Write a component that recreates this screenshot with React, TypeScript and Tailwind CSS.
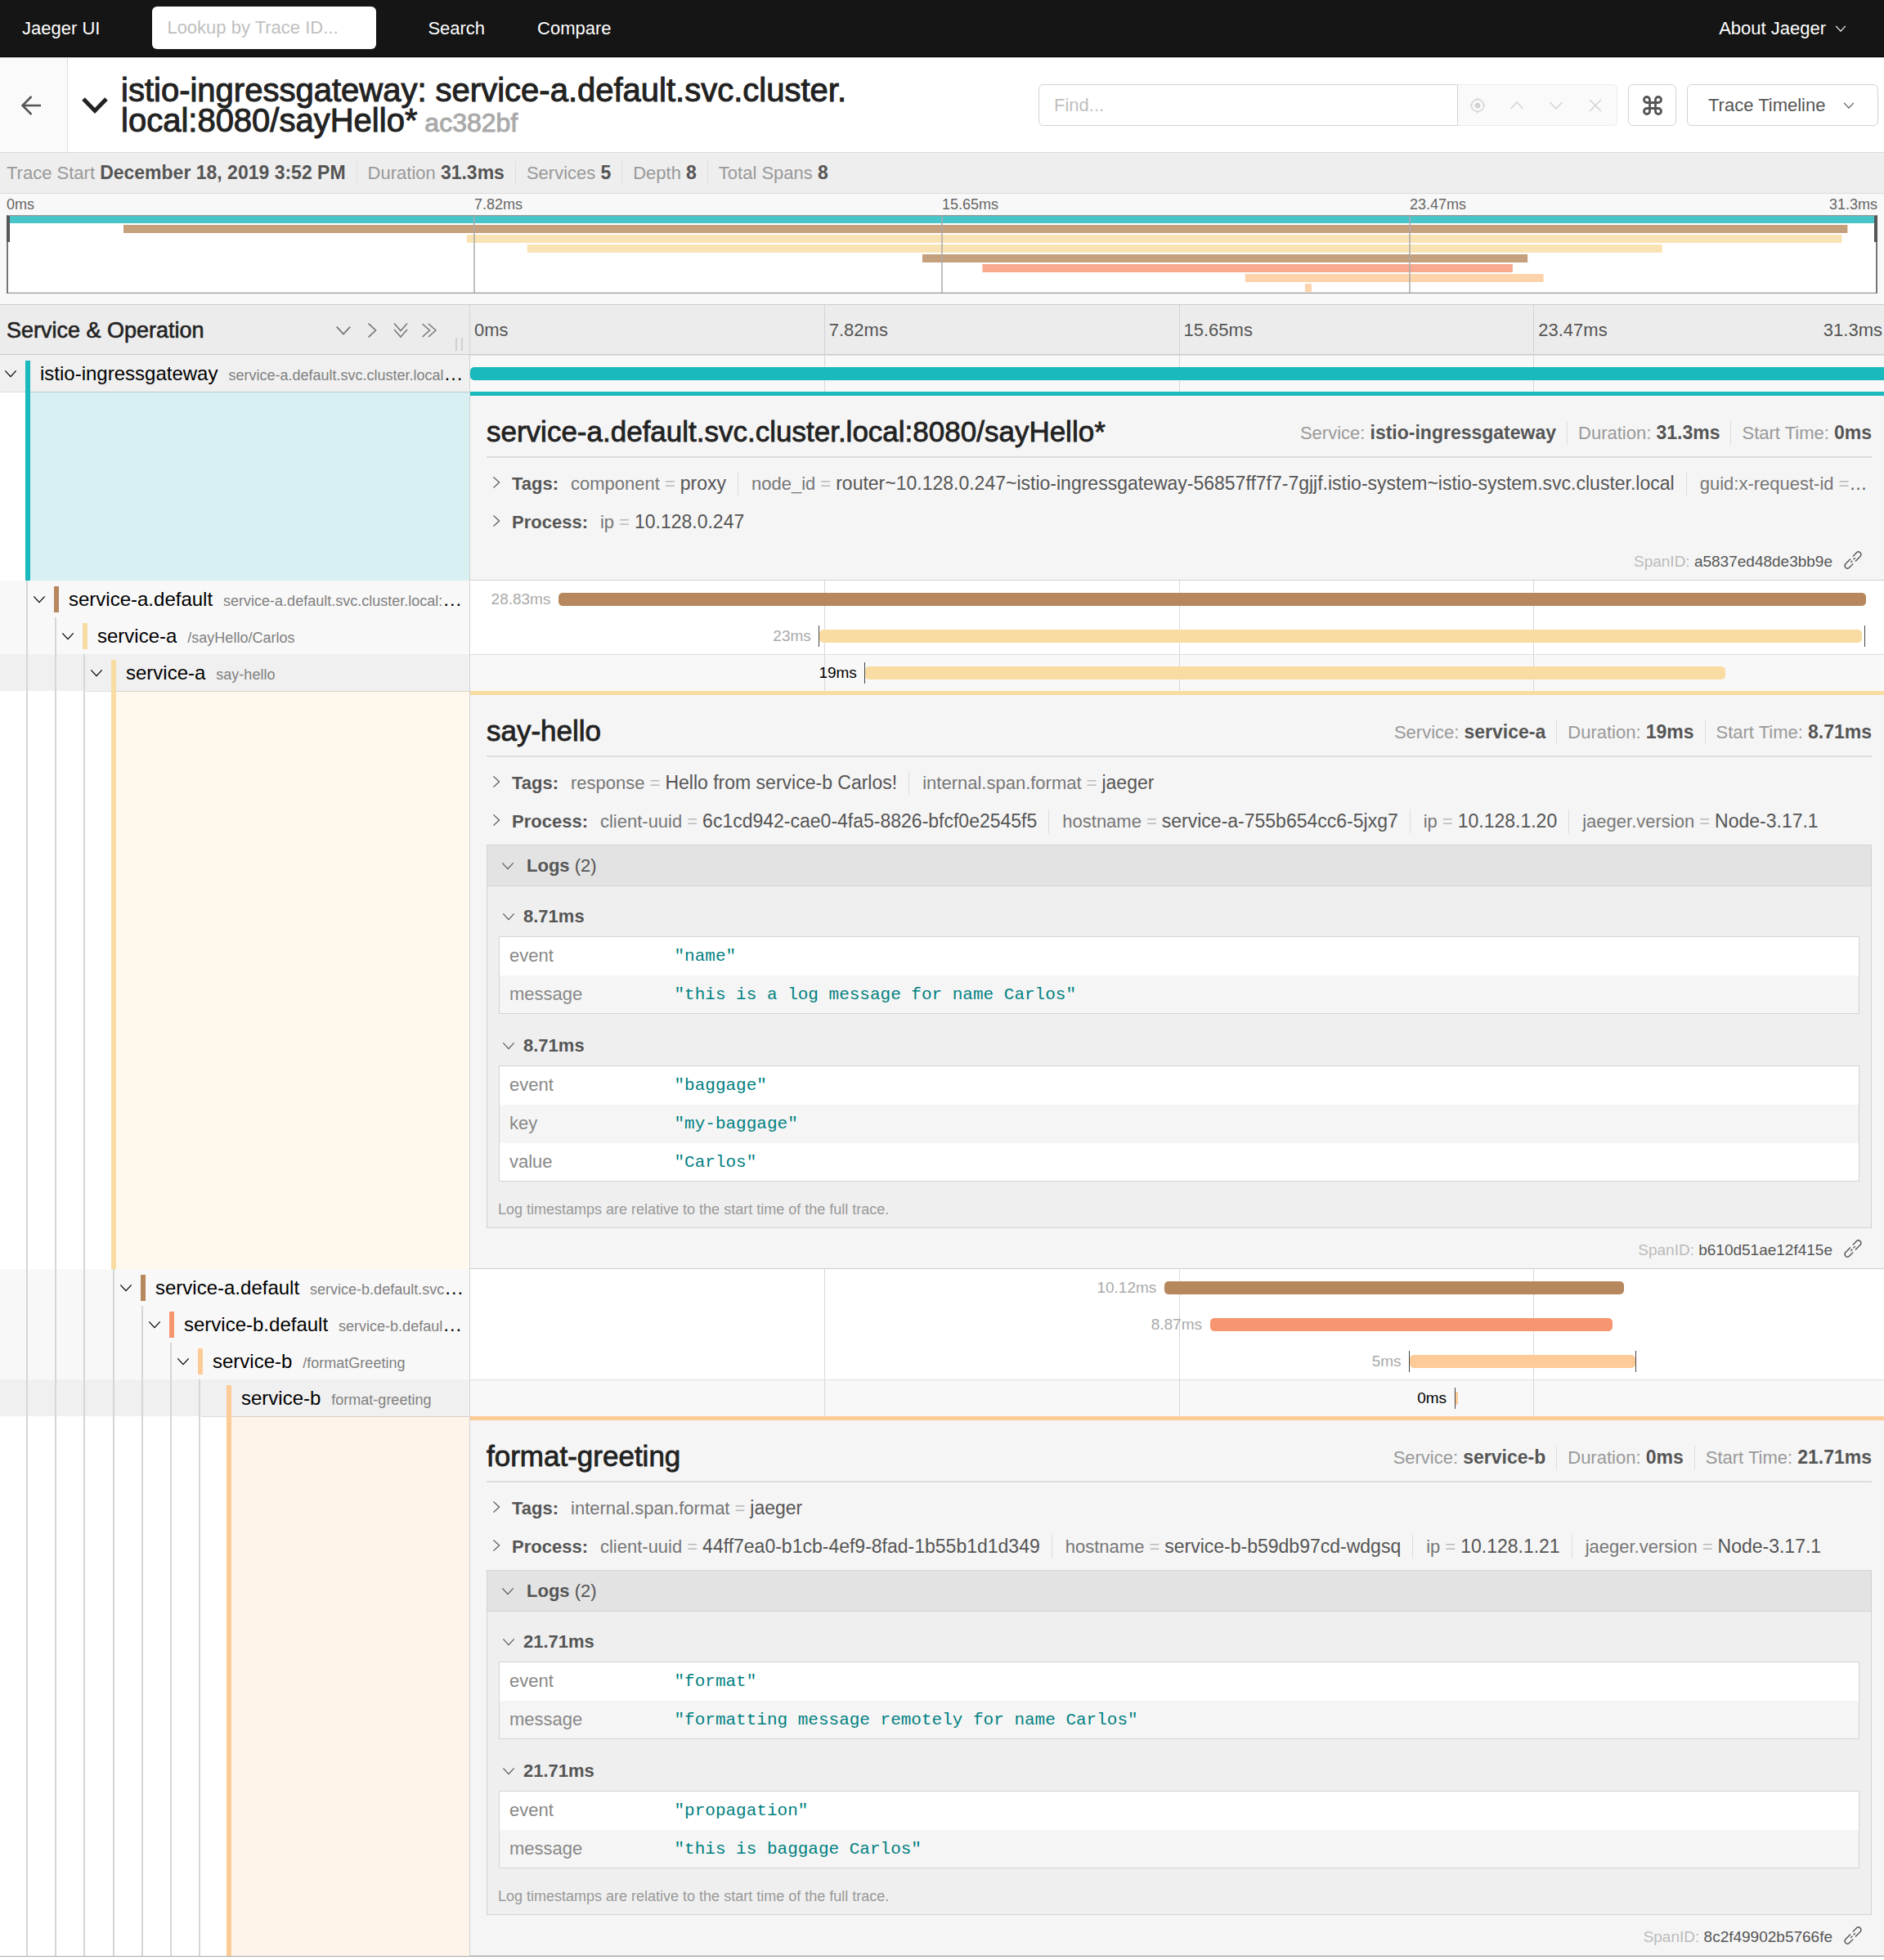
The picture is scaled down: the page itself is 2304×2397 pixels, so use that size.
import type { ReactNode } from "react";
import { Command } from "lucide-react";

type Direction = "down" | "right" | "up";

const CHEVRONS: Record<Direction, string> = {
  down: "M1.5 5 L9 13 L16.5 5",
  up: "M1.5 13 L9 5 L16.5 13",
  right: "M5 1.5 L13 9 L5 16.5",
};

function Chevron({ dir = "down", className = "size-[18px]", weight = 1.5 }: { dir?: Direction; className?: string; weight?: number }) {
  return (
    <svg viewBox="0 0 18 18" fill="none" stroke="currentColor" strokeWidth={weight} className={"shrink-0 " + className} aria-hidden="true">
      <path d={CHEVRONS[dir]} />
    </svg>
  );
}

function DoubleChevron({ dir }: { dir: "down" | "right" }) {
  return (
    <svg viewBox="0 0 20 20" fill="none" stroke="currentColor" strokeWidth="1.5" className="size-5 shrink-0" aria-hidden="true">
      {dir === "down" ? (
        <path d="M2 1.5 L10 10.500 L18 1.5 M2 9 L10 18 L18 9" />
      ) : (
        <path d="M1.5 2 L10.500 10 L1.5 18 M9 2 L18 10 L9 18" />
      )}
    </svg>
  );
}

function LocateIcon() {
  return (
    <svg viewBox="0 0 20 20" fill="none" stroke="currentColor" strokeWidth="1.5" className="size-5" aria-hidden="true">
      <circle cx="10" cy="10" r="7.5" />
      <circle cx="10" cy="10" r="3.5" fill="currentColor" stroke="none" />
      <path d="M10 0.500 V3 M10 17 V19.500 M0.500 10 H3 M17 10 H19.500" />
    </svg>
  );
}

function LinkIcon() {
  return (
    <svg viewBox="0 0 22 22" fill="none" stroke="currentColor" strokeWidth="1.4" className="size-[22px]" aria-hidden="true">
      <g transform="rotate(-46 11 11)">
        <path d="M10 7.8 H1.5 a3.2 3.2 0 0 0 0 6.4 H8" />
        <path d="M14 7.8 H20.500 a3.2 3.2 0 0 1 0 6.4 H12" />
        <path d="M7 11 H10 M12 11 H15" />
      </g>
    </svg>
  );
}

type Span = {
  service: string;
  op: string;
  depth: number;
  start: number;
  end: number;
  duration: string;
  bg: string;
  fill: string;
  markers?: number[];
  leaf?: boolean;
  detail?: Detail;
};

type Pair = [string, string];

type Detail = {
  topBorder: string;
  tint: string;
  startTime: string;
  tags: Pair[];
  process: Pair[];
  logs?: { time: string; fields: Pair[] }[];
  id: string;
};

const SPANS: Span[] = [
  {
    service: "istio-ingressgateway",
    op: "service-a.default.svc.cluster.local:8080/sayHello*",
    depth: 0,
    start: 0,
    end: 100,
    duration: "31.3ms",
    bg: "bg-[#1ab9be]",
    fill: "#47c5cb",
    detail: {
      topBorder: "border-[#1ab9be]",
      tint: "bg-[#d9f0f2]",
      startTime: "0ms",
      tags: [
        ["component", "proxy"],
        ["node_id", "router~10.128.0.247~istio-ingressgateway-56857ff7f7-7gjjf.istio-system~istio-system.svc.cluster.local"],
        ["guid:x-request-id", "5d7a3a4e-91c5-9f5c-a6cd-0c1d1b1b2c3f"],
      ],
      process: [["ip", "10.128.0.247"]],
      id: "a5837ed48de3bb9e",
    },
  },
  {
    service: "service-a.default",
    op: "service-a.default.svc.cluster.local:8080/sayHello*",
    depth: 1,
    start: 6.25,
    end: 98.4,
    duration: "28.83ms",
    bg: "bg-[#b7885e]",
    fill: "#c5a07d",
  },
  {
    service: "service-a",
    op: "/sayHello/Carlos",
    depth: 2,
    start: 24.6,
    end: 98.1,
    duration: "23ms",
    bg: "bg-[#f8dca1]",
    fill: "#f9e3b5",
    markers: [24.55, 98.25],
  },
  {
    service: "service-a",
    op: "say-hello",
    depth: 3,
    start: 27.83,
    end: 88.5,
    duration: "19ms",
    bg: "bg-[#f8dca1]",
    fill: "#f9e3b5",
    markers: [27.78],
    detail: {
      topBorder: "border-[#f8dca1]",
      tint: "bg-[#fff8ec]",
      startTime: "8.71ms",
      tags: [
        ["response", "Hello from service-b Carlos!"],
        ["internal.span.format", "jaeger"],
      ],
      process: [
        ["client-uuid", "6c1cd942-cae0-4fa5-8826-bfcf0e2545f5"],
        ["hostname", "service-a-755b654cc6-5jxg7"],
        ["ip", "10.128.1.20"],
        ["jaeger.version", "Node-3.17.1"],
      ],
      logs: [
        { time: "8.71ms", fields: [["event", "name"], ["message", "this is a log message for name Carlos"]] },
        { time: "8.71ms", fields: [["event", "baggage"], ["key", "my-baggage"], ["value", "Carlos"]] },
      ],
      id: "b610d51ae12f415e",
    },
  },
  {
    service: "service-a.default",
    op: "service-b.default.svc.cluster.local:8080/formatGreeting*",
    depth: 4,
    start: 48.95,
    end: 81.3,
    duration: "10.12ms",
    bg: "bg-[#b7885e]",
    fill: "#c5a07d",
  },
  {
    service: "service-b.default",
    op: "service-b.default.svc.cluster.local:8080/formatGreeting*",
    depth: 5,
    start: 52.16,
    end: 80.5,
    duration: "8.87ms",
    bg: "bg-[#f79570]",
    fill: "#f9aa8e",
  },
  {
    service: "service-b",
    op: "/formatGreeting",
    depth: 6,
    start: 66.2,
    end: 82.15,
    duration: "5ms",
    bg: "bg-[#fdcb98]",
    fill: "#fdd3aa",
    markers: [66.15, 82.15],
  },
  {
    service: "service-b",
    op: "format-greeting",
    depth: 7,
    start: 69.4,
    end: 69.6,
    duration: "0ms",
    bg: "bg-[#fdcb98]",
    fill: "#fdd3aa",
    markers: [69.4],
    leaf: true,
    detail: {
      topBorder: "border-[#fdcb98]",
      tint: "bg-[#fff4ea]",
      startTime: "21.71ms",
      tags: [["internal.span.format", "jaeger"]],
      process: [
        ["client-uuid", "44ff7ea0-b1cb-4ef9-8fad-1b55b1d1d349"],
        ["hostname", "service-b-b59db97cd-wdgsq"],
        ["ip", "10.128.1.21"],
        ["jaeger.version", "Node-3.17.1"],
      ],
      logs: [
        { time: "21.71ms", fields: [["event", "format"], ["message", "formatting message remotely for name Carlos"]] },
        { time: "21.71ms", fields: [["event", "propagation"], ["message", "this is baggage Carlos"]] },
      ],
      id: "8c2f49902b5766fe",
    },
  },
];

const TICKS = ["0ms", "7.82ms", "15.65ms", "23.47ms"];

function NavBar() {
  return (
    <nav className="flex h-[70px] items-center border-b border-black bg-[#151515] text-white">
      <a href="#home" className="pl-[27px]">Jaeger UI</a>
      <input
        type="text"
        aria-label="Lookup by Trace ID"
        placeholder="Lookup by Trace ID..."
        className="mb-0.5 ml-16 h-[52px] w-[274px] rounded-md bg-white px-[18px] text-[#555] placeholder:text-[#bfbfbf]"
      />
      <a href="#search" className="ml-[63px]">Search</a>
      <a href="#compare" className="ml-16">Compare</a>
      <button type="button" className="ml-auto mr-[46px] flex items-center gap-[11px]">
        About Jaeger
        <Chevron className="size-3.5" />
      </button>
    </nav>
  );
}

function IconButton({ label, children }: { label: string; children: ReactNode }) {
  return (
    <button type="button" aria-label={label} disabled className="flex w-12 items-center justify-center">
      {children}
    </button>
  );
}

function TitleBar() {
  return (
    <header className="flex h-[117px] items-stretch border-y border-[#dadada] bg-white">
      <a href="#back" aria-label="Back to search" className="flex w-[83px] items-center justify-center border-r border-[#ddd] bg-[#fafafa] pr-1.5 text-[#555]">
        <svg viewBox="0 0 24 24" fill="none" stroke="currentColor" strokeWidth="2.5" className="size-6" aria-hidden="true">
          <path d="M24 12 H2 M12.500 1 L1.5 12 L12.500 23" />
        </svg>
      </a>
      <button type="button" className="flex min-w-0 flex-1 items-center pl-[17px] text-left">
        <svg viewBox="0 0 32 22" fill="none" stroke="currentColor" strokeWidth="5" className="h-[22px] w-8 shrink-0 text-[#222]" aria-hidden="true">
          <path d="M2 3 L16 17.500 L30 3" />
        </svg>
        <h1 className="pl-4 pt-1 text-[40px] leading-[37px] text-[#222] [-webkit-text-stroke:1px_#222]">
          istio-ingressgateway: service-a.default.svc.cluster.
          <wbr />
          local:8080/sayHello*
          <span className="text-[32px] text-[#aaa] [-webkit-text-stroke:1px_#aaa]"> ac382bf</span>
        </h1>
      </button>
      <div className="flex items-center pr-[7px]">
        <input
          type="text"
          aria-label="Find"
          placeholder="Find..."
          className="h-[51px] w-[513px] rounded-l-md border border-[#d3d3d3] px-[18px] text-[#555] placeholder:text-[#bfbfbf]"
        />
        <div className="flex h-[51px] rounded-r-md border border-l-0 border-[#ececec] bg-[#fafafa] pr-0.5 text-[#d3d3d3]">
          <IconButton label="Focus matches"><LocateIcon /></IconButton>
          <IconButton label="Previous match"><Chevron dir="up" /></IconButton>
          <IconButton label="Next match"><Chevron /></IconButton>
          <IconButton label="Clear search">
            <svg viewBox="0 0 16 16" stroke="currentColor" strokeWidth="1.5" className="size-4" aria-hidden="true">
              <path d="M1 1 L15 15 M15 1 L1 15" />
            </svg>
          </IconButton>
        </div>
        <button type="button" aria-label="Keyboard shortcuts" className="ml-[13px] flex h-[51px] w-[59px] items-center justify-center rounded-md border border-[#d3d3d3] text-[#555]">
          <Command className="size-7" strokeWidth={2.4} />
        </button>
        <button type="button" className="ml-[13px] flex h-[51px] w-[234px] items-center justify-between rounded-md border border-[#d3d3d3] pl-[25px] pr-7 text-[#555]">
          Trace Timeline
          <Chevron className="size-3.5" />
        </button>
      </div>
    </header>
  );
}

function Facts({ items, suffix }: { items: Pair[]; suffix: string }) {
  return (
    <ul className="flex items-center whitespace-nowrap">
      {items.map(([label, value]) => (
        <li key={label} className="mr-[13px] border-r border-[#ddd] pr-[13px] leading-7 text-[#999] last:mr-0 last:border-0 last:pr-0">
          {label + suffix} <strong className="text-[23px] font-bold text-[#555]">{value}</strong>
        </li>
      ))}
    </ul>
  );
}

function Minimap() {
  return (
    <section aria-label="Trace overview" className="border-b border-[#ccc] bg-[#f8f8f8] px-2 pb-[13px]">
      <div className="flex h-[26px] text-[18px] leading-[27px] text-[#666]">
        {TICKS.map((t) => (
          <span key={t} className="w-0 flex-1">{t}</span>
        ))}
        <span className="w-0 whitespace-nowrap [direction:rtl]">31.3ms</span>
      </div>
      <svg width="100%" height="96" className="block bg-white" aria-hidden="true">
        {SPANS.map((s, i) => (
          <rect key={i} x={s.start + "%"} y={i * 12} width={Math.max(s.end - s.start, 0.35) + "%"} height="10" fill={s.fill} />
        ))}
        {[25, 50, 75].map((p) => (
          <line key={p} x1={p + "%"} x2={p + "%"} y1="0" y2="96" stroke="#aaa" strokeWidth="1.5" />
        ))}
        <path d="M0 0.500 H4000 M0 95.500 H4000" stroke="#999" strokeWidth="1.5" />
        <line x1="1" x2="1" y1="0" y2="96" stroke="#777" strokeWidth="2" />
        <line x1="100%" x2="100%" y1="0" y2="96" stroke="#777" strokeWidth="4" />
        <rect x="0" y="1" width="4" height="32" fill="#555" />
        <svg x="100%" overflow="visible"><rect x="-4" y="1" width="4" height="32" fill="#555" /></svg>
      </svg>
    </section>
  );
}

function TimelineHeader() {
  return (
    <div className="flex h-[61px] border-b border-[#ccc] bg-[#ececec]">
      <div className="flex w-[calc(25%-1px)] items-center border-r border-[#d3d3d3] px-2 pt-0.5">
        <h2 className="flex-1 text-[27px] text-[#222] [-webkit-text-stroke:0.6px_#222]">Service &amp; Operation</h2>
        <div className="flex items-center gap-[15px] text-[#777]">
          <button type="button" aria-label="Collapse one level" className="flex"><Chevron className="size-5" /></button>
          <button type="button" aria-label="Expand one level" className="flex"><Chevron dir="right" className="size-5" /></button>
          <button type="button" aria-label="Collapse all" className="flex"><DoubleChevron dir="down" /></button>
          <button type="button" aria-label="Expand all" className="flex"><DoubleChevron dir="right" /></button>
        </div>
        <div className="mb-1 ml-[22px] h-4 w-[9px] self-end border-x-2 border-[#d0d0d0]" />
      </div>
      <div className="relative -mr-1.5 flex flex-1 leading-[62px] text-[#555]">
        {TICKS.map((t) => (
          <span key={t} className="flex-1 border-r border-[#d3d3d3] pl-[5px]">{t}</span>
        ))}
        <span className="absolute right-2 top-0">31.3ms</span>
      </div>
    </div>
  );
}

function Guides({ count }: { count: number }) {
  return (
    <>
      {Array.from({ length: count }, (_, i) => (
        <span key={i} className="flex w-[35px] shrink-0 justify-end pr-px nth-[4n]:w-9">
          <span className="w-0.5 bg-[#d6d6d6]" />
        </span>
      ))}
    </>
  );
}

function SpanRow({ span }: { span: Span }) {
  const open = Boolean(span.detail);
  return (
    <div className="flex h-[45px]">
      <div className={"flex w-[calc(25%-1px)] border-r border-r-[#d3d3d3] " + (open ? "bg-[#f0f0f0]" : "bg-[#f8f8f8]")}>
        <Guides count={span.depth} />
        <button type="button" className="flex min-w-0 flex-1 pr-1.5 text-left">
          <span className="flex w-[31px] shrink-0 items-center self-center pl-[5px] text-black">
            {!span.leaf && <Chevron className="size-4" weight={1.4} />}
          </span>
          <span className={"w-1.5 shrink-0 " + span.bg + (open ? " mt-[7px] self-stretch" : " h-8 self-center")} />
          <span className="truncate pl-3 text-[24px] leading-[45px] text-black">
            {span.service}
            <span className="pl-[13px] text-[18px] text-[#808080]">{span.op}</span>
          </span>
        </button>
      </div>
      <div className={"relative -mr-1.5 flex flex-1 " + (open ? "border-t border-[#ddd] bg-[#f8f8f8]" : "bg-white")}>
        <div className="absolute inset-0 grid grid-cols-4">
          <span className="border-r border-[#d8d8d8]" />
          <span className="border-r border-[#d8d8d8]" />
          <span className="border-r border-[#d8d8d8]" />
        </div>
        <div className="relative flex w-full items-center">
          <span
            className={"shrink-0 text-right text-[19px] leading-[48px] " + (open ? "text-black" : "text-[#aaa]")}
            style={{ width: span.start + "%" }}
          >
            {span.start > 0 && <span className="pr-2.5">{span.duration}</span>}
          </span>
          <span className={"h-4 min-w-0.5 rounded-[5px] " + span.bg} style={{ width: span.end - span.start + "%" }} />
          {span.markers?.map((m) => (
            <span key={m} className="absolute h-[26px] w-px bg-[#444]" style={{ left: m + "%" }} />
          ))}
        </div>
      </div>
    </div>
  );
}

function PairList({ title, pairs }: { title: string; pairs: Pair[] }) {
  return (
    <button type="button" className="flex h-[47px] w-full items-center pl-1 text-left text-[#555]">
      <Chevron dir="right" className="mb-1 size-4" weight={1.4} />
      <span className="min-w-0 truncate pl-[11px] leading-9">
        <strong className="pr-[15px] font-bold">{title}:</strong>
        {pairs.map(([k, v], i) => (
          <span key={k} className={i < pairs.length - 1 ? "mr-4 border-r border-[#ddd] py-0.5 pr-3.5" : ""}>
            <span className="text-[#777]">{k}</span>
            <span className="px-1.5 text-[#bbb]">=</span>
            <span className="text-[23px]">{v}</span>
          </span>
        ))}
      </span>
    </button>
  );
}

function Logs({ logs }: { logs: NonNullable<Detail["logs"]> }) {
  return (
    <section className="mb-0.5 mt-[5px] border border-[#d3d3d3] bg-[#efefef]">
      <button type="button" className="flex h-[50px] w-full items-center border-b border-[#d3d3d3] bg-[#e3e3e3] pl-[17px] text-[#555]">
        <Chevron className="size-4" weight={1.3} />
        <span className="pl-[15px]"><strong className="font-bold">Logs</strong> (2)</span>
      </button>
      <div className="flex flex-col gap-[19px] px-3.5 pt-[17px]">
        {logs.map((log, i) => (
          <div key={i}>
            <button type="button" className="flex h-11 items-center gap-2.5 pb-1 pl-1 font-bold text-[#555]">
              <Chevron className="size-4" weight={1.3} />
              {log.time}
            </button>
            <table className="w-full table-fixed border border-[#d3d3d3] bg-white text-left">
              <tbody>
                {log.fields.map(([k, v]) => (
                  <tr key={k} className="h-[47px] even:bg-[#f5f5f5]">
                    <th scope="row" className="w-[201px] pl-3 font-normal text-[#888]">{k}</th>
                    <td className="pl-[13px] pt-0.5 font-['Liberation_Mono',monospace] text-[21px] text-[#008080]">&quot;{v}&quot;</td>
                  </tr>
                ))}
              </tbody>
            </table>
          </div>
        ))}
      </div>
      <p className="px-[13px] pt-3 text-[18px] leading-[44px] text-[#999]">Log timestamps are relative to the start time of the full trace.</p>
    </section>
  );
}

function DetailRow({ span, detail }: { span: Span; detail: Detail }) {
  return (
    <div className="flex">
      <div className="flex w-[calc(25%-1px)] border-r border-[#d3d3d3] bg-white">
        <Guides count={span.depth} />
        <span className="w-[31px] shrink-0 border-t border-[#ddd]" />
        <span className={"w-1.5 shrink-0 " + span.bg} />
        <span className={"flex-1 border-t border-black/15 " + detail.tint} />
      </div>
      <article className={"min-w-0 flex-1 border-t-[5px] bg-[#f5f5f5] " + detail.topBorder}>
        <div className="border-b border-[#d0d0d0] pl-5 pr-[15px] pt-3.5">
          <div className="flex h-[62px] items-center justify-between border-b-2 border-[#ddd]">
            <h2 className="text-[35px] text-[#222] [-webkit-text-stroke:0.8px_#222]">
              {span.depth === 0 ? "service-a.default.svc.cluster.local:8080/sayHello*" : span.op}
            </h2>
            <div className="pt-0.5">
              <Facts
                suffix=":"
                items={[
                  ["Service", span.service],
                  ["Duration", span.duration],
                  ["Start Time", detail.startTime],
                ]}
              />
            </div>
          </div>
          <div className="pt-2">
            <PairList title="Tags" pairs={detail.tags} />
            <PairList title="Process" pairs={detail.process} />
          </div>
          {detail.logs && <Logs logs={detail.logs} />}
          <div className="flex h-[47px] items-center justify-end pr-3 pt-0.5 text-[19px] text-[#555]">
            <span><span className="text-[#bbb]">SpanID:</span> {detail.id}</span>
            <a href={"#" + detail.id} aria-label="Copy link to span" className="mb-1 ml-3.5">
              <LinkIcon />
            </a>
          </div>
        </div>
      </article>
    </div>
  );
}

export default function App() {
  return (
    <div className="min-h-screen w-full overflow-hidden bg-white font-['Liberation_Sans',Arial,sans-serif] text-[22px] leading-7">
      <NavBar />
      <TitleBar />
      <div className="flex h-[50px] items-center border-b border-[#ddd] bg-[#eee] pl-2">
        <Facts
          suffix=""
          items={[
            ["Trace Start", "December 18, 2019 3:52 PM"],
            ["Duration", "31.3ms"],
            ["Services", "5"],
            ["Depth", "8"],
            ["Total Spans", "8"],
          ]}
        />
      </div>
      <Minimap />
      <TimelineHeader />
      <main className="border-b border-[#aaa]">
        {SPANS.map((span, i) => (
          <div key={i}>
            <SpanRow span={span} />
            {span.detail && <DetailRow span={span} detail={span.detail} />}
          </div>
        ))}
      </main>
    </div>
  );
}
